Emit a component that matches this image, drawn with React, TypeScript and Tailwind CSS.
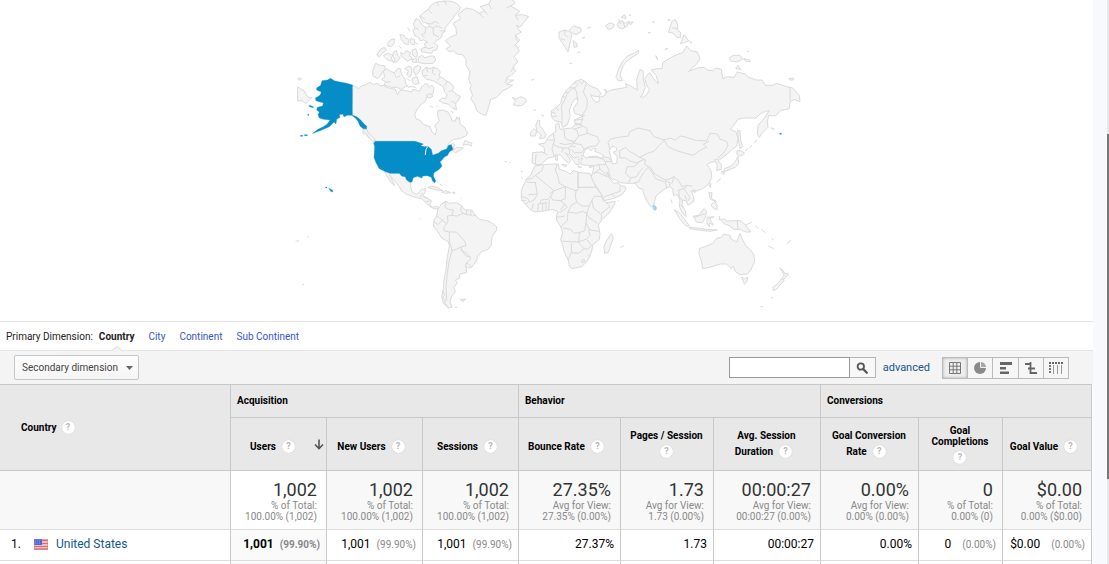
import { FC, ReactNode, useState } from "react"

interface Column {
  lines: string[]
  label: string
  width: string
  total: string
  note: string
  detail: string
  value: string
  share?: string
}

const columns: Column[] = [
  { label: "Users", lines: ["Users"], width: "w-[96px]", total: "1,002", note: "% of Total:", detail: "100.00% (1,002)", value: "1,001", share: "(99.90%)" },
  { label: "New Users", lines: ["New Users"], width: "w-[96px]", total: "1,002", note: "% of Total:", detail: "100.00% (1,002)", value: "1,001", share: "(99.90%)" },
  { label: "Sessions", lines: ["Sessions"], width: "w-[96px]", total: "1,002", note: "% of Total:", detail: "100.00% (1,002)", value: "1,001", share: "(99.90%)" },
  { label: "Bounce Rate", lines: ["Bounce Rate"], width: "w-[102px]", total: "27.35%", note: "Avg for View:", detail: "27.35% (0.00%)", value: "27.37%" },
  { label: "Pages / Session", lines: ["Pages / Session", ""], width: "w-[93px]", total: "1.73", note: "Avg for View:", detail: "1.73 (0.00%)", value: "1.73" },
  { label: "Avg. Session Duration", lines: ["Avg. Session", "Duration"], width: "w-[107px]", total: "00:00:27", note: "Avg for View:", detail: "00:00:27 (0.00%)", value: "00:00:27" },
  { label: "Goal Conversion Rate", lines: ["Goal Conversion", "Rate"], width: "w-[98px]", total: "0.00%", note: "Avg for View:", detail: "0.00% (0.00%)", value: "0.00%" },
  { label: "Goal Completions", lines: ["Goal", "Completions", ""], width: "w-[84px]", total: "0", note: "% of Total:", detail: "0.00% (0)", value: "0", share: "(0.00%)" },
  { label: "Goal Value", lines: ["Goal Value"], width: "w-[89px]", total: "$0.00", note: "% of Total:", detail: "0.00% ($0.00)", value: "$0.00", share: "(0.00%)" },
]

// land drawn in the same light grey, grouped by hemisphere
const americas = [
  // canada
  "M187,255 L200,262 206,266 215,257 228,254 240,247 250,254 262,250 272,258 280,256 290,262 305,266 316,268 322,284 328,274 335,270 350,272 365,276 368,268 378,270 388,274 394,262 400,256 410,250 418,262 426,255 432,264 430,278 424,288 410,292 406,304 392,314 380,330 374,345 378,356 392,362 400,374 420,380 426,396 436,405 440,390 434,378 448,362 442,346 444,332 458,330 474,336 482,350 486,362 496,364 500,350 504,358 508,352 510,372 526,384 526,390 533,396 528,408 508,416 490,418 476,430 470,442 488,430 494,434 488,452 470,448 445,460 425,466 418,448 400,434 375,425 260,425 244,414 232,392 218,366 187,346Z",
  "M218,388 L228,388 236,400 248,410 258,426 248,424 232,408Z M218,396 L222,404 M230,402 L238,414",
  // newfoundland and nova scotia
  "M520,434 L526,420 530,424 546,430 544,438 534,434Z M490,450 L500,442 520,444 506,454 496,458Z",
  // southampton and hudson bay islands
  "M410,286 L422,280 428,290 416,294Z M420,318 L428,322 M440,316 L444,320 M484,334 L490,338",
  // greenland
  "M490,70 L512,56 504,44 528,24 548,28 568,40 584,32 570,20 596,12 606,-6 660,-6 676,8 662,18 690,34 676,46 698,44 716,50 702,66 690,82 680,76 686,90 694,96 676,106 682,112 690,120 674,136 682,140 688,154 672,170 678,176 684,186 668,200 678,212 664,226 650,232 658,240 672,240 650,252 668,256 652,266 638,272 620,292 602,298 596,320 588,346 574,342 560,332 556,318 552,310 542,296 548,286 540,266 544,256 536,238 540,216 528,196 528,178 518,164 500,162 490,152 478,156 468,146 482,138 466,124 478,112 500,104 498,86Z",
  "M568,40 L580,52 M584,32 L592,44 M596,12 L604,26 M662,18 L650,24 M676,46 L684,60 M676,106 L682,124 M672,200 L664,214 M650,236 L646,248",
  // iceland
  "M668,292 L678,298 690,290 704,294 710,304 696,316 684,318 670,314 676,306Z",
  // chukotka across the date line
  "M24,262 L42,272 54,292 66,292 58,300 48,311 36,302 24,303Z M24,236 L30,232 34,238 28,240Z",
  // mexico and central america
  "M284,514 L300,520 328,520 335,528 346,530 350,540 362,546 362,560 366,575 378,582 388,578 394,568 408,566 404,578 398,590 412,594 424,602 420,614 428,622 440,618 446,626 432,626 420,620 408,608 398,598 385,594 370,590 348,582 335,572 325,556 310,538 298,524 312,552 314,558 302,546 292,530Z",
  "M414,562 L426,558 446,564 458,572 442,570Z M456,576 L468,572 482,578 468,580Z M488,578 L494,576 494,580Z",
  // south america
  "M444,626 L455,612 468,604 478,610 500,608 515,618 525,630 545,630 556,645 568,658 590,662 605,668 620,680 620,690 606,710 604,735 594,748 575,755 562,770 560,782 545,802 538,804 528,800 530,818 510,822 508,834 496,840 502,848 492,862 496,876 484,890 480,905 486,922 474,924 460,910 455,890 460,868 462,840 468,810 472,770 478,740 476,726 455,714 444,695 430,678 432,660 440,648Z",
  "M458,872 L464,884 458,892 466,902 464,910 474,918 M512,899 L526,897 520,904Z M496,922 L500,922",
]

// arctic archipelago, shares its own origin
const arctic = [
  // ellesmere and axel heiberg
  "M165,48 L175,38 190,28 200,14 215,6 238,3 258,4 275,10 287,22 280,36 270,44 262,58 250,72 240,84 240,94 232,100 230,112 218,120 208,128 218,138 215,150 204,152 200,160 185,158 168,155 172,144 182,142 178,130 188,126 176,120 165,122 160,112 150,108 144,92 149,84 145,72 153,56 163,60 170,74 182,82 196,80 186,70 174,66Z",
  "M165,48 L178,56 M186,70 L198,72 212,64 220,70 M190,28 L200,40 M215,6 L222,18 M196,80 L206,84 214,78 232,84 M204,86 L206,104 220,110 M182,82 L180,100 170,104 178,112 M180,142 L192,146 204,142 M152,84 L160,88 M238,3 L244,14 M240,94 L226,92",
  // devon
  "M160,172 L170,166 180,174 195,168 208,168 212,180 204,190 180,191 162,188Z",
  // baffin
  "M172,212 L184,202 196,206 205,202 218,206 226,216 222,228 236,236 246,244 258,250 266,262 262,272 276,284 286,290 278,304 272,310 274,330 260,322 250,312 236,310 222,302 232,294 242,296 246,284 238,274 236,262 226,254 218,250 208,244 196,240 184,238 174,228Z",
  "M184,202 L188,216 M205,202 L202,218 210,224 M226,232 L218,240 M246,244 L240,256 M262,272 L252,274 M272,310 L260,304 M174,228 L186,226",
  // banks and victoria
  "M24,210 L32,190 46,196 60,198 60,208 52,216 48,226 38,236 24,228Z",
  "M56,212 L66,206 76,214 88,218 98,206 106,206 108,216 112,228 120,236 122,250 128,258 116,262 110,270 98,262 80,262 70,258 56,256 62,246 50,238 58,232Z M88,218 L94,232 104,228 M62,246 L76,246",
  "M120,206 L132,198 140,204 140,220 134,232 126,224 130,214Z M148,202 L160,196 168,202 162,216 152,226 146,214Z M144,234 L156,230 162,250 150,254 142,246Z M126,236 L134,242 M130,262 L142,258 154,264",
  // melville and the northwest islands
  "M36,164 L46,148 58,142 64,150 52,160 44,170Z M56,166 L70,160 84,166 78,174 84,184 68,180Z M86,156 L94,152 98,166 106,174 98,184 84,188 90,178 84,170Z",
  "M68,130 L76,120 88,116 88,128 80,140 70,138Z M106,104 L116,106 122,114 130,118 130,134 118,130 110,120Z M136,116 L148,118 150,134 138,132Z",
  "M108,158 L116,162 124,152 136,158 134,166 142,176 128,184 116,174 110,170Z M142,150 L152,146 158,160 154,172 144,166Z M142,178 L154,176 156,188 144,186Z M128,84 L134,92 M102,138 L108,144 M152,128 L158,132 M164,150 L168,146",
]

const americasBorders =
  "M468,604 L464,620 476,628 490,630 486,646 472,648 474,664 470,672 M515,618 L512,632 520,640 500,648 486,646 M530,630 L530,644 520,640 M543,632 L542,645 530,644 M556,645 L548,648 542,645 M440,648 L452,656 470,672 462,680 462,692 478,696 478,726 M432,664 L444,674 458,660 M478,696 L500,696 512,710 524,724 528,738 514,740 514,750 530,760 538,768 542,776 530,788 526,800 M478,726 L484,742 486,752 500,748 514,740 M486,752 L478,780 472,820 468,860 470,900 M514,750 L528,768 540,770 M530,788 L545,800 M390,592 L396,580 M404,590 L412,594 M408,606 L420,602"

const oldWorld = [
  // europe and asia
  "M134,362 L124,350 124,332 140,322 152,310 156,292 168,272 184,256 196,244 214,238 228,246 240,258 262,266 272,280 268,290 250,288 242,284 248,296 258,308 268,304 268,292 282,288 290,276 304,270 328,266 350,262 346,250 368,262 382,270 380,240 390,208 400,214 400,238 406,262 396,286 390,290 400,292 412,282 418,268 410,256 404,236 418,218 434,240 446,252 438,226 424,210 442,206 456,206 458,188 474,178 495,166 518,158 530,138 542,152 562,156 570,176 560,192 536,214 562,204 582,202 592,210 608,212 618,204 634,208 638,236 652,230 672,232 682,216 706,222 716,232 738,240 756,240 766,256 788,256 800,250 830,260 848,264 868,286 870,305 852,298 840,306 838,326 812,332 796,348 776,346 772,364 774,382 756,400 748,412 742,402 744,376 762,356 778,332 766,334 750,342 738,354 700,354 684,358 662,388 678,396 684,416 680,438 666,448 652,462 636,474 624,482 634,494 634,508 620,512 622,496 616,484 600,488 590,494 598,502 604,516 604,536 596,552 578,566 556,574 544,572 552,596 550,606 534,616 528,602 518,600 516,616 526,632 528,650 516,638 508,618 510,600 502,584 490,586 488,566 478,560 466,566 450,578 438,588 434,604 430,620 422,620 412,606 402,584 398,568 386,564 376,550 352,550 330,548 318,540 306,538 298,524 290,516 302,540 312,550 324,548 330,556 346,560 348,568 336,584 314,594 284,602 276,586 262,564 246,540 244,530 250,510 250,498 232,496 214,494 212,484 218,474 206,478 208,494 198,494 190,482 178,466 166,458 176,472 182,484 176,490 160,476 150,464 138,468 126,472 114,474 98,488 94,494 76,494 66,488 68,458 92,456 104,458 102,442 86,432 104,430 116,410 130,400 138,394 136,376 146,368 150,388 168,386 186,384 196,374 194,360 206,354 224,346 210,346 194,340 190,326 202,308 204,296 194,298 186,310 178,330 180,350 172,374 158,382 152,366Z",
  // great britain and ireland
  "M78,374 L84,360 90,362 88,376 98,388 108,404 104,414 88,416 94,404 82,396Z M62,396 L72,386 80,394 76,408 62,408Z",
  // svalbard
  "M148,96 L164,90 176,94 186,104 182,120 174,156 166,142 158,130 148,116Z M178,90 L190,78 212,84 214,94 200,104 188,100Z M190,122 L200,130 202,140 194,142Z M164,90 L166,106 174,110 M152,116 L164,120",
  // franz josef land
  "M288,76 L300,68 314,74 308,84 296,88Z M322,72 L332,62 346,70 356,64 352,78 338,86 328,84Z M334,52 L344,44 348,54Z M358,66 L370,66 362,74Z M358,46 L362,46Z M326,58 L332,72 M338,62 L344,80",
  // novaya zemlya
  "M318,230 L326,206 338,184 352,168 376,158 386,150 386,160 366,172 350,184 340,196 334,212 330,226 338,242 326,242Z",
  // severnaya zemlya
  "M476,96 L486,64 496,58 504,78 500,88 512,98 512,112 500,112 490,100Z M512,130 L522,104 536,122Z M474,60 L480,60Z M540,126 L544,128Z M488,84 L502,86",
  // new siberian islands
  "M658,174 L670,166 690,166 698,178 680,186 664,184Z M702,176 L720,180 720,186 708,184Z M678,204 L684,196 692,208Z M838,236 L850,234 850,240 840,240Z",
  // small arctic islets
  "M234,84 L240,82Z M218,114 L224,112Z M204,158 L208,156Z M180,190 L184,190Z M66,240 L70,238Z M72,328 L76,332Z M96,346 L100,348Z M416,98 L420,98Z M428,66 L432,66Z M438,168 L442,178Z M466,148 L472,146Z M714,154 L716,154Z M284,268 L290,270 288,276Z",
  // sakhalin, kurils and japan
  "M684,392 L690,392 692,420 698,440 690,446 686,424Z M720,442 L724,436 M734,428 L740,420 M784,384 L792,388Z",
  "M682,452 L692,452 704,460 692,468 682,464Z M684,470 L686,490 676,502 660,508 640,516 644,506 664,498 676,484Z M636,514 L644,514 642,522 638,522Z M706,452 L714,446 M620,546 L632,536",
  // taiwan, hainan, philippines
  "M598,556 L602,550 602,562Z M550,570 L556,570 554,578Z M598,578 L606,578 604,594 612,602 602,598Z M604,614 L614,604 622,616 620,630 610,624Z M612,600 L618,604Z",
  // indonesia and new guinea
  "M494,630 L508,638 524,658 538,678 528,678 512,660Z M538,682 L560,684 588,688 622,690 600,694 564,690 540,686Z M552,648 L566,646 582,626 590,634 586,652 578,668 560,666Z M592,652 L612,650 598,656 604,664 610,676 598,668 598,680 592,672Z M634,660 L642,656 652,664 670,662 690,662 706,674 722,696 706,696 692,688 672,688 656,676 644,672Z M628,650 L630,660Z M708,674 L724,668 M736,678 L744,684 M754,688 L766,698",
  // australia, tasmania and new zealand
  "M570,745 L590,738 608,730 620,715 635,712 640,702 660,706 662,716 680,726 686,712 690,700 698,720 708,738 722,750 732,765 734,785 722,810 712,822 690,824 676,815 670,798 664,806 650,792 630,792 600,802 578,806 575,785 567,762Z",
  "M696,832 L704,836 714,832 710,846 704,852Z M810,804 L820,812 824,820 836,822 828,830 820,840 818,832 822,826Z M816,836 L822,842 812,852 802,866 790,872 788,862 802,852Z",
  "M776,738 L790,746 M786,716 L790,720 M832,730 L842,722 M784,894 L788,892 M752,920 L758,920 M332,742 L340,738 M324,602 L326,604 M484,600 L486,608",
  // africa
  "M75,498 L100,494 130,492 145,492 148,508 170,515 180,522 190,512 210,518 240,520 245,535 258,562 272,580 280,602 290,608 316,604 312,616 300,636 275,660 265,675 270,700 268,718 248,735 246,750 240,768 230,785 215,800 185,806 178,798 175,780 162,755 158,735 152,720 158,698 152,680 140,660 140,645 145,635 128,628 118,630 95,634 75,636 60,628 45,612 34,595 34,570 48,540 62,525Z",
  "M305,702 L310,715 302,735 295,758 284,760 282,740 288,725Z",
  // mediterranean islands
  "M138,464 L142,466 142,482 138,480Z M156,494 L170,494 168,500Z M204,500 L214,502Z M238,502 L246,500Z M34,514 L36,514 M34,532 L38,536",
]

const oldWorldBorders = [
  // scandinavia and eastern europe
  "M156,372 L156,340 154,318 164,300 172,280 186,266 196,262 204,252 M202,296 L200,276 192,262 M228,252 L220,276 232,300 230,326 216,346 M216,346 L218,358 210,374 196,374 M194,360 L218,358 M196,370 L214,374 M216,380 L196,386 M210,374 L230,384 232,400 206,408 M232,400 L262,410 268,424 258,438 238,440 224,446",
  // norwegian fjords
  "M126,336 L136,340 M128,350 L140,348 M160,290 L166,292 M168,276 L176,278 M178,264 L186,262 M192,250 L200,248 M206,242 L212,250 M220,244 L216,252 M140,324 L146,332",
  "M162,390 L164,410 172,420 194,424 206,408 200,390 188,386 M130,400 L134,420 130,432 142,440 M134,420 L116,420 M150,430 L166,434 184,430 196,424 M130,432 L126,446 132,468 M142,440 L160,444 176,444 190,430 214,434 222,448 216,458 194,458 182,448 M176,444 L180,462 192,474 206,470 M160,444 L156,456 M96,456 L112,464 M78,464 L76,492 M184,438 L196,440",
  // central asia
  "M300,448 L294,428 300,418 324,412 356,408 358,396 384,384 420,392 432,410 462,420 M462,420 L480,414 496,420 512,408 530,412 560,422 590,422 600,400 622,402 630,418 650,424 654,438 640,460 624,474",
  "M462,420 L474,440 500,452 520,458 550,466 568,452 590,442 580,432 596,424 M462,422 L444,440 432,454 412,460 388,472 406,480 404,494 422,502 432,520 448,530 466,540 480,536 492,530 506,542 516,560 530,556 546,558",
  "M330,452 L346,442 358,454 374,462 388,472 M328,452 L330,474 346,474 362,484 380,488 404,478 M352,500 L372,500 390,484 M352,500 L346,520 362,534 356,548 M362,534 L380,530 388,516 398,504 M374,548 L386,546 392,532 404,514 414,502 430,522 M430,522 L436,536 466,546 470,564",
  "M466,542 L480,548 478,560 M492,530 L486,550 M506,570 L508,590 516,600 M508,570 L520,566 532,580 540,594 532,604 M520,566 L530,560 M524,586 L530,598 M512,616 L520,622 M614,480 L622,478 M552,652 L584,642 M682,662 L684,690",
  // turkey and the middle east
  "M214,468 L226,466 238,472 260,472 282,478 288,494 266,494 250,498 M266,494 L270,506 252,520 M288,494 L296,508 298,524 M270,506 L292,528 298,534 M276,470 L298,474 306,486 288,484 M252,520 L262,516 290,530 M284,590 L306,582 316,592 M306,582 L330,574 330,560 M840,262 L840,300",
  // africa
  "M100,496 L96,512 76,526 66,536 48,538 M76,526 L132,572 120,580 M76,548 L82,582 56,584 M50,546 L76,548 M142,492 L136,510 144,530 148,550 166,560 132,572 M204,518 L204,544 M240,562 L204,562 204,518 M204,544 L204,570 198,572 166,560 M204,562 L258,562 M198,572 L196,590 200,606 184,616 M132,572 L122,590 114,598 94,600 88,612 M122,590 L128,600 152,602 166,596 166,560 M152,602 L164,612 152,630 M164,612 L172,622 150,638",
  "M200,606 L216,618 238,618 246,600 254,588 272,590 M246,600 L250,624 270,640 M184,616 L174,636 200,640 218,634 230,640 238,618 M290,608 L300,620 274,640 274,658 M230,640 L236,652 262,670 M174,636 L172,662 152,680 M140,652 L164,648 M160,684 L182,688 192,700 206,698 224,692 228,670 230,640 M228,670 L240,690 266,694",
  "M158,724 L206,726 208,700 M206,726 L228,718 240,706 236,690 M184,730 L184,758 176,776 M184,758 L206,760 222,746 206,728 M222,746 L234,748 244,736 232,720 M34,590 L52,594 58,604 48,612 M34,602 L46,602 M60,606 L72,600 82,584 M70,612 L66,628 M84,612 L84,634 M98,610 L98,632 M108,606 L108,630 M118,600 L116,628 M88,612 L108,608 M216,782 L222,778 224,784 218,788Z M234,764 L238,768",
]

const usa = [
  // alaska
  "M187,255 L170,250 150,246 133,242 122,235 112,240 96,242 92,256 80,264 80,270 94,276 90,286 76,294 78,302 90,306 100,308 98,318 82,322 80,330 88,336 84,344 88,354 100,358 120,360 112,372 100,380 84,388 68,400 86,394 104,386 118,380 124,374 132,366 138,372 140,358 150,352 148,344 158,342 162,350 172,346 187,346 200,350 212,360 222,372 230,378 230,386 220,386 210,378 204,364 196,354 187,347Z",
  "M58,316 L70,320 70,323 58,320Z M54,343 L57,343 57,346 54,346Z M32,406 L38,406 38,409 32,409Z M44,404 L52,404 52,407 44,407Z",
  // contiguous states
  "M256,424 L375,424 400,432 392,437 404,440 416,440 424,448 428,466 445,460 454,452 470,447 476,436 484,434 489,448 478,456 473,466 462,472 456,480 450,486 456,498 448,508 432,518 430,528 437,542 434,549 427,542 424,532 412,527 398,528 396,534 382,529 370,533 366,546 360,547 350,540 346,530 335,528 328,520 300,520 284,514 268,506 258,488 252,472 254,440 251,430Z",
  // hawaii and the far aleutians
  "M108,561 L111,561 111,564 108,564Z M117,565 L128,571 128,576 122,574Z M1470,400 L1474,400 1474,403 1470,403Z",
]

const WorldMap: FC = () => (
  <svg
    viewBox="-21 0 1581 963"
    className="w-[527px] h-[321px] shrink-0"
    role="img"
    aria-label="Users by country"
    strokeLinejoin="round"
    strokeLinecap="round"
  >
    <g fill="#f4f4f4" stroke="#dadada" strokeWidth="3">
      {americas.map((d) => (
        <path key={d} d={d} />
      ))}
      <g transform="translate(225 0)">
        {arctic.map((d) => (
          <path key={d} d={d} />
        ))}
      </g>
      <path d={americasBorders} fill="none" />
      <path d="M388,656 L390,658 M54,710 L56,711 M18,724 L26,722 M38,853 L41,853 M646,484 L650,486 M658,488 L660,488 M694,514 L696,514 M512,594 L514,596 M438,542 L444,548 M450,552 L456,558" />
    </g>

    <g fill="#f4f4f4" stroke="#dadada" strokeWidth="3" transform="translate(660 0)">
      {oldWorld.map((d) => (
        <path key={d} d={d} />
      ))}
      {oldWorldBorders.map((d) => (
        <path key={d} d={d} fill="none" />
      ))}
      {/* black sea and caspian */}
      <g fill="#ffffff">
        <path d="M220,464 L224,450 236,444 242,452 250,446 258,446 254,454 270,460 282,468 274,474 258,468 240,470 228,474Z" />
        <path d="M298,450 L308,438 320,444 320,452 310,456 322,470 320,490 308,492 304,478 300,462Z" />
      </g>
      <path d="M431,616 L438,620 439,628 434,631 430,626Z" fill="#9fd3ea" stroke="#9fd3ea" />
    </g>

    <g fill="#058dc7">
      {usa.map((d) => (
        <path key={d} d={d} stroke="#058dc7" strokeWidth="1" />
      ))}
    </g>
    {/* great lakes */}
    <path d="M406,464 L408,448 412,442 M398,436 L410,434 M418,440 L424,446" fill="none" stroke="#ffffff" strokeWidth="3" />
  </svg>
)

const Help: FC<{ className?: string }> = ({ className = "" }) => (
  <span
    className={`inline-flex h-[13px] w-[13px] shrink-0 items-center justify-center rounded-full bg-white text-[9px] font-bold leading-none text-[#b8b8b8] shadow-[0_0_1px_#bbb] ${className}`}
  >
    ?
  </span>
)

const Flag: FC = () => (
  <svg viewBox="0 0 14 11" className="h-[11px] w-[14px] shrink-0" aria-hidden="true">
    <rect width="14" height="11" fill="#f6dcdc" />
    <path d="M0,1.5H14M0,4.5H14M0,7.5H14M0,10H14" stroke="#e46a6a" strokeWidth="1.5" />
    <rect width="8" height="6" fill="#4a68d8" />
    <path d="M1,2H7M1,4H7" stroke="#8da0ec" strokeWidth="1" strokeDasharray="1 1" />
    <rect x="0.5" y="0.5" width="13" height="10" fill="none" stroke="#b08a9c" strokeOpacity="0.4" />
  </svg>
)

const views: { name: string; icon: ReactNode }[] = [
  {
    name: "Data table",
    icon: <path d="M1.5,1.5H12.5V12.5H1.5ZM1.5,5.2H12.5M1.5,8.8H12.5M5.2,1.5V12.5M8.8,1.5V12.5" fill="none" stroke="#777" strokeWidth="1" />,
  },
  {
    name: "Percentage",
    icon: (
      <>
        <circle cx="7" cy="7" r="6" fill="#8a8a8a" />
        <path d="M8,1.1A6,6 0 0 1 12.9,6H8Z" fill="#a8a8a8" />
        <path d="M7.5,1V6.5H13" fill="none" stroke="#f4f4f4" strokeWidth="1" />
      </>
    ),
  },
  {
    name: "Performance",
    icon: <path d="M1,1H13V4H1ZM1,6H7V8.5H1ZM1,10.5H10V13H1Z" fill="#666" />,
  },
  {
    name: "Comparison",
    icon: <path d="M6.5,1V13M1,3H6.5M4,7.5H11M6.5,12H13" fill="none" stroke="#666" strokeWidth="1.8" />,
  },
  {
    name: "Pivot",
    icon: (
      <>
        <path d="M0,2H14" stroke="#666" strokeWidth="2" strokeDasharray="2 1" />
        <path d="M1,4V13" stroke="#777" strokeWidth="2" strokeDasharray="2 1" />
        <path d="M4.5,4V13M8.5,4V13M12.5,4V13" stroke="#999" strokeWidth="1" />
      </>
    ),
  },
]

const ColumnHeading: FC<{ column: Column }> = ({ column }) => {
  const leading = column.lines.slice(0, -1)
  const last = column.lines[column.lines.length - 1]

  return (
    <div className="flex flex-col items-center pr-px">
      {leading.map((line) => (
        <span key={line}>{line}</span>
      ))}
      <span className="flex h-[17px] items-center pt-1">
        {last}
        <Help className={last ? "ml-[6px] mr-[6px]" : ""} />
      </span>
    </div>
  )
}

const App: FC = () => {
  const [dimension, setDimension] = useState("Country")
  const [view, setView] = useState("Data table")
  const [query, setQuery] = useState("")

  return (
    <div className="flex min-h-screen bg-white font-['Roboto',sans-serif] text-[10px] leading-[11px] text-black">
      <main className="min-w-0 flex-1">
        <section className="flex justify-center overflow-hidden">
          <WorldMap />
        </section>

        {/* primary dimension */}
        <nav className="flex h-[30px] items-center border-y border-[#e5e5e5] pl-[6px] text-[#222]">
          <span className="mr-[6px]">Primary Dimension:</span>
          <ul className="flex gap-[14px]">
            {["Country", "City", "Continent", "Sub Continent"].map((item) => (
              <li key={item} className="relative">
                <a
                  href="#"
                  onClick={() => setDimension(item)}
                  className={item === dimension ? "font-bold text-[#222]" : "text-[#3355cc]"}
                >
                  {item}
                </a>
                {item === dimension && (
                  <svg viewBox="0 0 10 5" className="absolute left-1/2 top-[15px] h-[5px] w-[10px] -translate-x-1/2">
                    <path d="M0,5L5,0.5L10,5Z" fill="#f4f4f4" />
                    <path d="M0,4.5L5,0.5L10,4.5" fill="none" stroke="#dddddd" />
                  </svg>
                )}
              </li>
            ))}
          </ul>
        </nav>

        {/* toolbar */}
        <div className="flex h-[33px] items-center justify-between bg-[#f4f4f4] pl-[14px] pr-6">
          <div className="relative">
            <select
              aria-label="Secondary dimension"
              className="block h-[25px] w-[125px] appearance-none rounded-[2px] border border-[#c6c6c6] bg-gradient-to-b from-white to-[#f4f4f4] pl-[7px] text-[10px] text-[#444]"
            >
              <option>Secondary dimension</option>
            </select>
            <svg viewBox="0 0 7 4" className="pointer-events-none absolute right-[6px] top-[11px] h-[4px] w-[7px]">
              <path d="M0,0H7L3.5,4Z" fill="#666" />
            </svg>
          </div>

          <div className="flex items-center">
            <form className="flex" onSubmit={(e) => e.preventDefault()}>
              <input
                type="text"
                aria-label="Search"
                value={query}
                onChange={(e) => setQuery(e.target.value)}
                className="h-[21px] w-[121px] border border-[#999] bg-white px-1 outline-none"
              />
              <button
                type="submit"
                aria-label="Search"
                className="flex h-[21px] w-[26px] items-center justify-center border border-l-0 border-[#b5b5b5] bg-[#f8f8f8]"
              >
                <svg viewBox="0 0 12 12" className="h-[12px] w-[12px]">
                  <circle cx="4.8" cy="4.5" r="3.2" fill="none" stroke="#555" strokeWidth="1.8" />
                  <path d="M7.2,7L10.8,10.8" stroke="#555" strokeWidth="2.2" strokeLinecap="round" />
                </svg>
              </button>
            </form>
            <a href="#" className="ml-[7px] mr-[12px] text-[11px] text-[#15568f]">
              advanced
            </a>
            <div className="flex h-[22px] w-[127px] border border-[#bbb]">
              {views.map(({ name, icon }) => (
                <button
                  key={name}
                  type="button"
                  aria-label={name}
                  aria-pressed={view === name}
                  onClick={() => setView(name)}
                  className={`flex flex-1 items-center justify-center border-r border-[#bbb] last:border-r-0 ${
                    view === name ? "bg-[#eeeeee] shadow-[inset_0_0_3px_#aaa]" : "bg-[#f6f6f6]"
                  }`}
                >
                  <svg viewBox="0 0 14 14" className="h-[14px] w-[14px]">
                    {icon}
                  </svg>
                </button>
              ))}
            </div>
          </div>
        </div>

        {/* report */}
        <div className="pr-px">
          <table className="w-full table-fixed border-separate border-spacing-0 border-t border-[#c8c8c8]">
            <colgroup>
              <col />
              {columns.map((column) => (
                <col key={column.label} className={column.width} />
              ))}
            </colgroup>
            <thead className="bg-[#e8e8e8] text-left [&_th]:border-b [&_th]:border-r [&_th]:border-[#c8c8c8] [&_th]:p-0 [&_th]:font-bold">
              <tr className="h-[33px]">
                <th rowSpan={2}>
                  <span className="flex items-center pl-[21px]">
                    Country
                    <Help className="ml-[5px]" />
                  </span>
                </th>
                {["Acquisition", "Behavior", "Conversions"].map((group) => (
                  <th key={group} colSpan={3}>
                    <div className="pb-[2px] pl-[6px]">{group}</div>
                  </th>
                ))}
              </tr>
              <tr className="h-[53px]">
                {columns.map((column, i) => (
                  <th key={column.label} aria-sort={i === 0 ? "descending" : undefined}>
                    {i === 0 ? (
                      <div className="flex items-center justify-end pr-[2px]">
                        <ColumnHeading column={column} />
                        <svg viewBox="0 0 10 11" className="ml-[12px] h-[11px] w-[10px]">
                          <path d="M5,0.5V9.5M1,5.5L5,9.5L9,5.5" fill="none" stroke="#555" strokeWidth="1.6" />
                        </svg>
                      </div>
                    ) : (
                      <ColumnHeading column={column} />
                    )}
                  </th>
                ))}
              </tr>
            </thead>
            <tbody className="text-right [&_td]:border-r [&_td]:border-r-[#c8c8c8] [&_td]:p-0">
              <tr className="h-[59px] bg-[#f8f8f8] [&_td]:border-b [&_td]:border-b-[#dddddd]">
                <td />
                {columns.map((column, i) => (
                  <td key={column.label} className={i === 0 ? "bg-white" : ""}>
                    <div className="whitespace-nowrap pr-[9px] text-[#888]">
                      <div className="text-[18px] leading-[21px] text-[#333]">{column.total}</div>
                      <div>{column.note}</div>
                      <div>{column.detail}</div>
                    </div>
                  </td>
                ))}
              </tr>
              <tr className="h-[31px] text-[12px] [&_td]:border-b [&_td]:border-b-[#dddddd]">
                <td>
                  <div className="flex items-center pb-[2px] pl-[11px]">
                    <span className="w-[23px] text-left">1.</span>
                    <Flag />
                    <a href="#" className="ml-[8px] text-[#15568f]">
                      United States
                    </a>
                  </div>
                </td>
                {columns.map((column, i) => (
                  <td key={column.label} className={i === 0 ? "bg-[#fafafa] font-bold" : ""}>
                    <div className="flex items-center justify-end whitespace-nowrap pb-[2px] pr-[6px]">
                      {column.value}
                      {column.share && (
                        <span className={`text-[10px] text-[#888] ${column.share === "(0.00%)" ? "ml-[11px]" : "ml-[6px]"}`}>
                          {column.share}
                        </span>
                      )}
                    </div>
                  </td>
                ))}
              </tr>
              <tr className="h-[3px]">
                <td />
                {columns.map((column, i) => (
                  <td key={column.label} className={i === 0 ? "bg-[#fafafa]" : ""} />
                ))}
              </tr>
            </tbody>
          </table>
        </div>
      </main>

      {/* page gutter and scroll bar */}
      <div className="w-[14px] shrink-0 bg-[#f7f9fc]" />
      <div className="w-[2px] shrink-0 bg-[#e4e6e8] pt-[134px]">
        <div className="h-[345px] bg-[#777]" />
      </div>
    </div>
  )
}

export default App
